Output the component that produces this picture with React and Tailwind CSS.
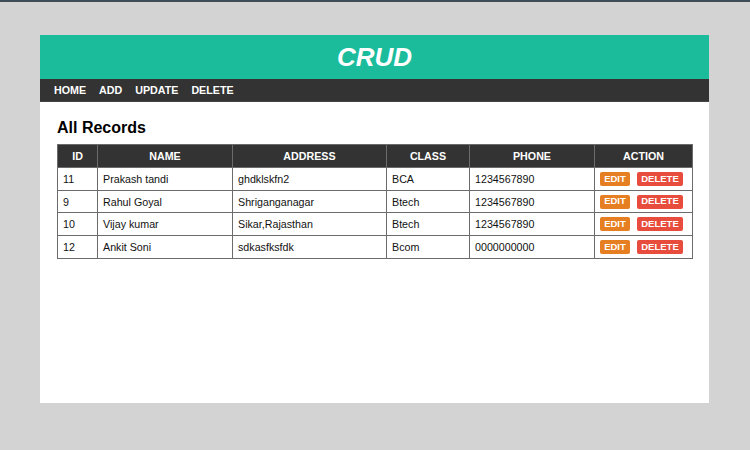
import React from "react";

const rows = [
  ["11", "Prakash tandi", "ghdklskfn2", "BCA", "1234567890"],
  ["9", "Rahul Goyal", "Shriganganagar", "Btech", "1234567890"],
  ["10", "Vijay kumar", "Sikar,Rajasthan", "Btech", "1234567890"],
  ["12", "Ankit Soni", "sdkasfksfdk", "Bcom", "0000000000"],
];

const headers = ["ID", "NAME", "ADDRESS", "CLASS", "PHONE", "ACTION"];
const widths = ["w-[40px]", "w-[135px]", "w-[154px]", "w-[83px]", "w-[125px]", "w-[98px]"];

export default function App() {
  return (
    <div
      className="min-h-[450px] bg-[#d3d3d3] border-t-2 border-[#3d4c56] pt-[33px]"
      style={{ fontFamily: '"Liberation Sans", Arial, sans-serif' }}
    >
      <div className="ml-[40px] w-[669px] h-[368px] bg-white">
        <div className="h-[44px] bg-[#1abc9c] flex items-center justify-center">
          <h1 className="text-[26px] font-bold italic text-white leading-none">CRUD</h1>
        </div>
        <nav className="h-[23px] bg-[#333333] border-b border-[#444] flex items-center gap-[13px] pl-[14px] text-[10.7px] font-bold text-white">
          <span>HOME</span>
          <span>ADD</span>
          <span>UPDATE</span>
          <span>DELETE</span>
        </nav>
        <div className="px-[17px] pt-[16px]">
          <h2 className="text-[16px] font-bold leading-[19px] text-black mb-[7px]">All Records</h2>
          <table className="w-[635px] table-fixed border-collapse border border-[#6b6b6b] text-[10.7px] text-[#111]">
            <colgroup>
              {widths.map((w, i) => (
                <col key={i} className={w} />
              ))}
            </colgroup>
            <thead>
              <tr className="h-[23px] bg-[#333333]">
                {headers.map((h) => (
                  <th key={h} className="border border-[#6b6b6b] text-white font-bold text-center p-0">
                    {h}
                  </th>
                ))}
              </tr>
            </thead>
            <tbody>
              {rows.map((r) => (
                <tr key={r[0]} className="h-[22.7px]">
                  {r.map((c, i) => (
                    <td key={i} className="border border-[#6b6b6b] px-[5px] py-0">
                      {c}
                    </td>
                  ))}
                  <td className="border border-[#6b6b6b] pl-[5px] py-0">
                    <div className="flex items-center gap-[7px]">
                      <span className="h-[14px] w-[30px] flex items-center justify-center rounded-[2px] bg-[#e67e22] text-white font-bold text-[9.5px]">
                        EDIT
                      </span>
                      <span className="h-[14px] w-[46px] flex items-center justify-center rounded-[2px] bg-[#e74c3c] text-white font-bold text-[9.5px]">
                        DELETE
                      </span>
                    </div>
                  </td>
                </tr>
              ))}
            </tbody>
          </table>
        </div>
      </div>
    </div>
  );
}
